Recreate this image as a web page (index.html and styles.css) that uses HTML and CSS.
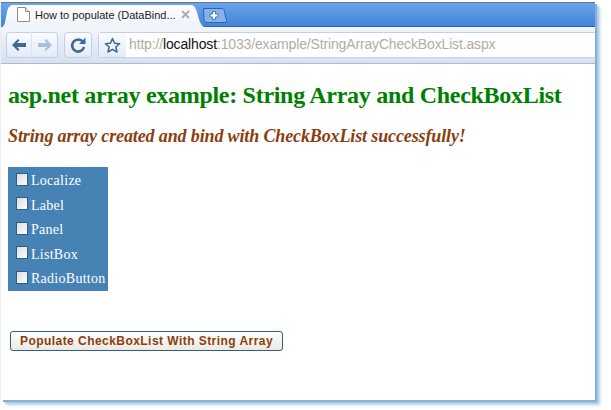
FILE: index.html
```html
<!DOCTYPE html>
<html lang="en">
<head>
<meta charset="utf-8">
<title>How to populate (DataBind...</title>
<link rel="stylesheet" href="styles.css">
</head>
<body>
<div class="window">
  <div class="tabstrip">
    <div class="tab">
      <svg class="page-icon" width="13" height="15" viewBox="0 0 13 15"><path d="M.5.500h8l4 4v10H.5z" fill="#fff" stroke="#8c8c8c"/><path d="M8.500.500v4h4" fill="#eee" stroke="#8c8c8c"/></svg>
      <span class="tab-title">How to populate (DataBind...</span>
      <svg class="tab-close" width="9" height="9" viewBox="0 0 9 9"><path d="M1 1l7 7M8 1l-7 7" stroke="#a9adb3" stroke-width="1.800"/></svg>
    </div>
    <svg class="newtab" width="24" height="15" viewBox="0 0 24 15"><path d="M.5.500h19c1 0 1.500 1 2 3 .5 3 1 6 2 8v3H4c-2 0-3-2-3-4z" fill="#86b2ec" stroke="#2c64ad"/><path d="M9.500 3.500h3v2.500H15v3h-2.500v2.500h-3V9H7V6h2.500z" fill="#f4f8fd" stroke="#4f76a8"/></svg>
  </div>
  <div class="toolbar">
    <div class="btn-group">
      <button class="tool tool-left" type="button"><svg width="16" height="14" viewBox="0 0 16 14"><path d="M1 7l6-6 1.500 1.500L6 5h9v4H6l2.500 2.500L7 13z" fill="#3f6797"/></svg></button>
      <button class="tool tool-right" type="button"><svg width="16" height="14" viewBox="0 0 16 14"><path d="M15 7L9 1 7.500 2.500 10 5H1v4h9l-2.500 2.500L9 13z" fill="#a9c0de"/></svg></button>
    </div>
    <button class="tool tool-single" type="button"><svg width="18" height="18" viewBox="0 0 18 18"><path d="M14 6A6 6 0 1 0 15 11" fill="none" stroke="#3f6797" stroke-width="2.600"/><path d="M16.500 1.500v6.500H10z" fill="#3f6797"/></svg></button>
    <div class="omnibox">
      <div class="star"><svg width="17" height="17" viewBox="0 0 17 17"><path d="M8.500 1.500l2.100 4.700 5 .5-3.800 3.300 1.200 5-4.500-2.700L4 15l1.200-5L1.400 6.700l5-.5z" fill="#f4f7fb" stroke="#3f6797" stroke-width="1.500" stroke-linejoin="round"/></svg></div>
      <div class="url"><span class="dim">http://</span>localhost<span class="dim">:1033/example/StringArrayCheckBoxList.aspx</span></div>
    </div>
  </div>
  <main class="content">
    <h2 class="title">asp.net array example: String Array and CheckBoxList</h2>
    <h3 class="message">String array created and bind with CheckBoxList successfully!</h3>
    <div class="list">
      <label class="row"><span class="box"></span>Localize</label>
      <label class="row"><span class="box"></span>Label</label>
      <label class="row"><span class="box"></span>Panel</label>
      <label class="row"><span class="box"></span>ListBox</label>
      <label class="row"><span class="box"></span>RadioButton</label>
    </div>
    <button class="populate" type="button">Populate CheckBoxList With String Array</button>
  </main>
</div>
</body>
</html>
```
FILE: styles.css
```css
* { box-sizing: border-box; }
html, body { margin: 0; padding: 0; background: #fff; overflow: hidden; }
body { width: 611px; height: 410px; padding: 2px 0 0 1px; }
.window {
  width: 594px;
  height: 398px;
  background: #fff;
  display: flex;
  flex-direction: column;
  box-shadow: -1px 0 0 #ececec, 2px 2px 0 #86aed6, 4px 4px 2px #a9c8e4, 6px 6px 3px #dce9f4;
  border-top: 1px solid #6b7684;
}
.tabstrip {
  height: 24px;
  flex: none;
  display: flex;
  align-items: flex-end;
  background: linear-gradient(#6aa5ec, #4284d8);
  border-bottom: 1px solid #2c64ad;
}
.tab {
  width: 204px;
  height: 23px;
  margin-bottom: -1px;
  flex: none;
  display: flex;
  align-items: center;
  padding: 0 15px 2px 16px;
  background: linear-gradient(#fff, #eef3fa);
  clip-path: path("M0 23C4 23 4 18 6 8C7 3 9 1 12 1L190 1C193 1 194 3 196 8C198 16 200 23 204 23Z");
  font: 11px "Liberation Sans", Arial, sans-serif;
  color: #222;
}
.page-icon { flex: none; margin-right: 5px; }
.tab-title { flex: 1; white-space: nowrap; }
.tab-close { flex: none; }
.newtab {
  flex: none;
  margin: 0 0 3px -2px;
}
.toolbar {
  height: 37px;
  flex: none;
  display: flex;
  align-items: flex-start;
  gap: 6px;
  padding: 5px 0 0 5px;
  background: linear-gradient(#f2f6fc, #d5e1f2);
  border-bottom: 1px solid #b4bac2;
}
.btn-group { display: flex; }
.tool {
  height: 26px;
  padding: 0;
  display: flex;
  align-items: center;
  justify-content: center;
  background: linear-gradient(#fafcfe, #e3ebf6);
  border: 1px solid #c5d1e2;
}
.tool-left { width: 26px; border-radius: 4px 0 0 4px; border-right-color: #dde5f0; }
.tool-right { width: 26px; border-left: 0; border-radius: 0 4px 4px 0; }
.tool-single { width: 28px; border-radius: 4px; }
.omnibox {
  flex: 1;
  height: 26px;
  display: flex;
  background: #fff;
  border: 1px solid #c5d1e2;
  border-right: 0;
  border-radius: 4px 0 0 4px;
}
.star {
  width: 27px;
  display: flex;
  align-items: center;
  justify-content: center;
  background: linear-gradient(#fafcfe, #e3ebf6);
}
.url {
  padding: 3px 0 0 3px;
  font: 14px "Liberation Sans", Arial, sans-serif;
  letter-spacing: -.15px;
  color: #111;
  white-space: nowrap;
}
.dim { color: #b0aea2; }
.content {
  flex: 1;
  padding: 18px 0 0 7px;
  font-family: "Liberation Serif", "Times New Roman", serif;
}
.title {
  margin: 0;
  font-size: 24px;
  line-height: 27px;
  font-weight: bold;
  letter-spacing: -.29px;
  color: #008000;
  white-space: nowrap;
}
.message {
  margin: 17px 0 0;
  font-size: 18px;
  line-height: 21px;
  font-weight: bold;
  font-style: italic;
  letter-spacing: -.13px;
  color: #8b3e10;
  white-space: nowrap;
}
.list {
  width: 100px;
  height: 124px;
  margin-top: 20px;
  padding-top: 2px;
  background: #4682b4;
  color: #fff;
  font-size: 14px;
  letter-spacing: .27px;
}
.row {
  height: 24.500px;
  display: flex;
  align-items: center;
  white-space: nowrap;
}
.box {
  width: 12px;
  height: 13px;
  margin: -4px 3px 0 8px;
  background: linear-gradient(135deg, #dcdcd6, #fff);
  border: 1px solid #2b5f8f;
}
.populate {
  display: block;
  width: 273px;
  height: 20px;
  margin: 40px 0 0 2px;
  padding: 0;
  background: linear-gradient(#fff, #ece9df);
  border: 1px solid #2b5f8f;
  border-radius: 3px;
  font: bold 12px "Liberation Sans", Arial, sans-serif;
  letter-spacing: .45px;
  color: #8b3e10;
}
```
